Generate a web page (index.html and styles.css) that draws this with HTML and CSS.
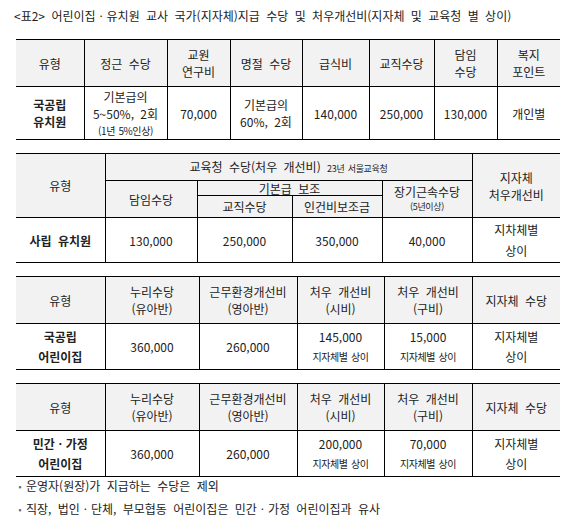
FILE: index.html
```html
<!DOCTYPE html>
<html lang="ko">
<head>
<meta charset="utf-8">
<title>표2</title>
<link rel="stylesheet" href="styles.css">
</head>
<body>
<div class="page">
  <p class="title">&lt;표2&gt; 어린이집ㆍ유치원 교사 국가(지자체)지급 수당 및 처우개선비(지자체 및 교육청 별 상이)</p>

  <table class="tbl t1">
    <colgroup>
      <col style="width:68px"><col style="width:83px"><col style="width:63px"><col style="width:72px">
      <col style="width:67px"><col style="width:65px"><col style="width:63px"><col style="width:63px">
    </colgroup>
    <thead>
      <tr class="h47">
        <th>유형</th><th>정근 수당</th>
        <th><span class="ln">교원</span><span class="ln">연구비</span></th>
        <th>명절 수당</th>
        <th>급식비</th><th>교직수당</th>
        <th><span class="ln">담임</span><span class="ln">수당</span></th>
        <th><span class="ln">복지</span><span class="ln">포인트</span></th>
      </tr>
    </thead>
    <tbody>
      <tr class="h53">
        <td class="lbl"><span class="ln">국공립</span><span class="ln">유치원</span></td>
        <td><span class="ln">기본급의</span><span class="ln">5~50%, 2회</span><span class="ln s10">(1년 5%인상)</span></td>
        <td>70,000</td>
        <td><span class="ln">기본급의</span><span class="ln">60%, 2회</span></td>
        <td>140,000</td>
        <td>250,000</td>
        <td>130,000</td>
        <td>개인별</td>
      </tr>
    </tbody>
  </table>

  <table class="tbl t2">
    <colgroup>
      <col style="width:89px"><col style="width:92px"><col style="width:95px">
      <col style="width:90px"><col style="width:90px"><col style="width:88px">
    </colgroup>
    <thead>
      <tr class="r1">
        <th rowspan="3">유형</th>
        <th colspan="4">교육청 수당(처우 개선비) <span class="s9">23년 서울교육청</span></th>
        <th rowspan="3"><span class="ln l17">지자체</span><span class="ln l17">처우개선비</span></th>
      </tr>
      <tr class="r2">
        <th rowspan="2">담임수당</th>
        <th colspan="2" class="tight">기본급 보조</th>
        <th rowspan="2"><span class="ln">장기근속수당</span><span class="ln s9">(5년이상)</span></th>
      </tr>
      <tr class="r3">
        <th>교직수당</th><th>인건비보조금</th>
      </tr>
    </thead>
    <tbody>
      <tr class="h45">
        <td class="lbl">사립 유치원</td>
        <td>130,000</td>
        <td>250,000</td>
        <td>350,000</td>
        <td>40,000</td>
        <td><span class="ln l21">지차체별</span><span class="ln l21">상이</span></td>
      </tr>
    </tbody>
  </table>

  <table class="tbl t3">
    <colgroup>
      <col style="width:89px"><col style="width:94px"><col style="width:98px">
      <col style="width:87px"><col style="width:88px"><col style="width:88px">
    </colgroup>
    <thead>
      <tr class="h47">
        <th>유형</th>
        <th><span class="ln">누리수당</span><span class="ln">(유아반)</span></th>
        <th><span class="ln">근무환경개선비</span><span class="ln">(영아반)</span></th>
        <th><span class="ln">처우 개선비</span><span class="ln">(시비)</span></th>
        <th><span class="ln">처우 개선비</span><span class="ln">(구비)</span></th>
        <th>지자체 수당</th>
      </tr>
    </thead>
    <tbody>
      <tr class="h46">
        <td class="lbl"><span class="ln">국공립</span><span class="ln">어린이집</span></td>
        <td>360,000</td>
        <td>260,000</td>
        <td><span class="ln">145,000</span><span class="ln s10">지자체별 상이</span></td>
        <td><span class="ln">15,000</span><span class="ln s10">지자체별 상이</span></td>
        <td><span class="ln">지자체별</span><span class="ln">상이</span></td>
      </tr>
    </tbody>
  </table>

  <table class="tbl t3">
    <colgroup>
      <col style="width:89px"><col style="width:94px"><col style="width:98px">
      <col style="width:87px"><col style="width:88px"><col style="width:88px">
    </colgroup>
    <thead>
      <tr class="h47">
        <th>유형</th>
        <th><span class="ln">누리수당</span><span class="ln">(유아반)</span></th>
        <th><span class="ln">근무환경개선비</span><span class="ln">(영아반)</span></th>
        <th><span class="ln">처우 개선비</span><span class="ln">(시비)</span></th>
        <th><span class="ln">처우 개선비</span><span class="ln">(구비)</span></th>
        <th>지자체 수당</th>
      </tr>
    </thead>
    <tbody>
      <tr class="h46">
        <td class="lbl"><span class="ln">민간ㆍ가정</span><span class="ln">어린이집</span></td>
        <td>360,000</td>
        <td>260,000</td>
        <td><span class="ln">200,000</span><span class="ln s10">지자체별 상이</span></td>
        <td><span class="ln">70,000</span><span class="ln s10">지자체별 상이</span></td>
        <td><span class="ln">지자체별</span><span class="ln">상이</span></td>
      </tr>
    </tbody>
  </table>

  <div class="notes">
    <p class="note first"><span class="bullet">•</span>운영자(원장)가 지급하는 수당은 제외</p>
    <p class="note"><span class="bullet">•</span>직장, 법인ㆍ단체, 부모협동 어린이집은 민간ㆍ가정 어린이집과 유사</p>
  </div>
</div>
</body>
</html>
```

FILE: styles.css
```css
html, body {
  margin: 0;
  padding: 0;
  background: #ffffff;
}

body {
  font-family: "Noto Sans CJK KR", "Noto Sans", sans-serif;
  font-size: 12px;
  color: #222222;
  word-spacing: 3px;
}

.page {
  padding-left: 16px;
  width: 544px;
}

.title {
  margin: 0 0 0 -2px;
  height: 39px;
  box-sizing: border-box;
  padding-top: 8px;
  line-height: 16px;
  font-size: 12px;
  white-space: nowrap;
}

.tbl {
  border-collapse: collapse;
  table-layout: fixed;
  width: 544px;
  border-left: hidden;
  border-right: hidden;
}

.tbl + .tbl {
  margin-top: 13px;
}

.tbl th,
.tbl td {
  border: 1px solid #000000;
  padding: 0;
  text-align: center;
  vertical-align: middle;
  font-weight: normal;
  white-space: nowrap;
}

.tbl thead th {
  background: #f2f2f2;
}

.tbl .lbl {
  font-weight: bold;
}

.ln {
  display: block;
  overflow: visible;
}

.t1 .ln {
  height: 17px;
  line-height: 17px;
}

.h47 { height: 47px; }
.h53 { height: 53px; }
.h45 { height: 45px; }
.h46 { height: 46px; }

.t2 .r1 { height: 27px; }
.t2 .r2 { height: 15px; }
.t2 .r3 { height: 22px; }

.t2 th,
.t2 td {
  line-height: 15px;
}

.t2 .ln {
  height: 15px;
  line-height: 15px;
}

.t2 .tight {
  line-height: 13px;
}

.t2 .ln.l17 {
  height: 17px;
  line-height: 17px;
}

.t2 .ln.l21 {
  height: 21px;
  line-height: 21px;
}

.t3 th .ln {
  height: 17px;
  line-height: 17px;
}

.t3 td .ln {
  height: 20px;
  line-height: 20px;
}

.s10 {
  font-size: 10px;
  letter-spacing: -0.4px;
  word-spacing: 1px;
}

.s9 {
  font-size: 9px;
  letter-spacing: -0.3px;
  word-spacing: 1px;
}

.notes {
  padding-top: 1px;
  margin-left: -2px;
}

.note {
  margin: 6px 0 0 0;
  line-height: 16px;
  white-space: nowrap;
}

.note.first {
  margin-top: 0;
}

.bullet {
  display: inline-block;
  width: 12px;
  font-size: 9px;
  color: #666666;
  text-align: center;
  vertical-align: 1px;
}
```
